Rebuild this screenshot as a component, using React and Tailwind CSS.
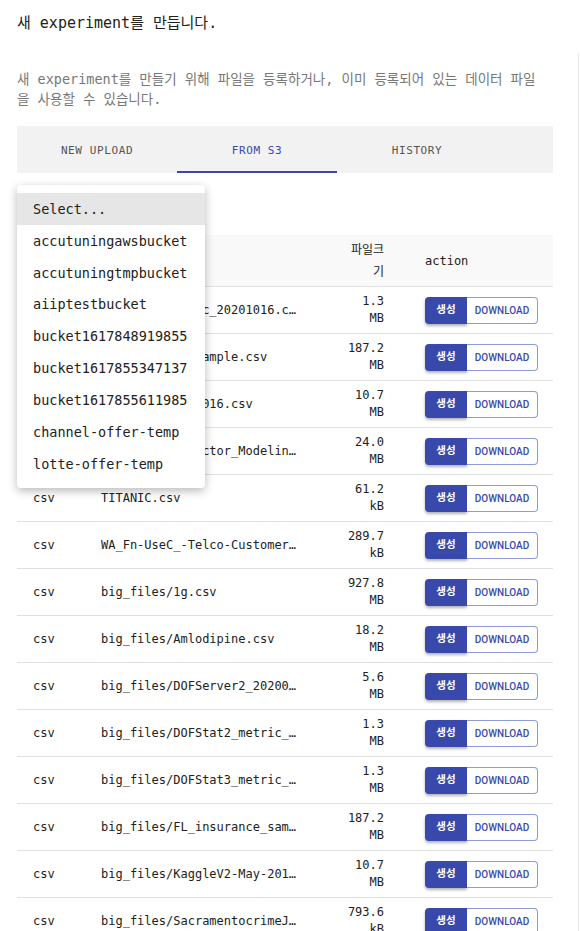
import React from 'react'

const buckets = [
    'Select...',
    'accutuningawsbucket',
    'accutuningtmpbucket',
    'aiiptestbucket',
    'bucket1617848919855',
    'bucket1617855347137',
    'bucket1617855611985',
    'channel-offer-temp',
    'lotte-offer-temp',
]

const files = [
    { name: 'DOFStat1_metric_20201016.csv', size: '1.3', unit: 'MB' },
    { name: 'FL_insurance_sample.csv', size: '187.2', unit: 'MB' },
    { name: 'KaggleV2-May-2016.csv', size: '10.7', unit: 'MB' },
    { name: 'Credit_Risk_Factor_Modeling.csv', size: '24.0', unit: 'MB' },
    { name: 'TITANIC.csv', size: '61.2', unit: 'kB' },
    { name: 'WA_Fn-UseC_-Telco-Customer-Churn.csv', size: '289.7', unit: 'kB' },
    { name: 'big_files/1g.csv', size: '927.8', unit: 'MB' },
    { name: 'big_files/Amlodipine.csv', size: '18.2', unit: 'MB' },
    { name: 'big_files/DOFServer2_20200901.csv', size: '5.6', unit: 'MB' },
    { name: 'big_files/DOFStat2_metric_20201016.csv', size: '1.3', unit: 'MB' },
    { name: 'big_files/DOFStat3_metric_20201016.csv', size: '1.3', unit: 'MB' },
    { name: 'big_files/FL_insurance_sample.csv', size: '187.2', unit: 'MB' },
    { name: 'big_files/KaggleV2-May-2016.csv', size: '10.7', unit: 'MB' },
    { name: 'big_files/SacramentocrimeJanuary2006.csv', size: '793.6', unit: 'kB' },
]

const tabs = ['NEW UPLOAD', 'FROM S3', 'HISTORY']

const App = () => {
    return (
        <main className="w-[580px] bg-white text-[#212121] font-['DejaVu_Sans_Mono','Noto_Sans_CJK_KR',monospace]">
            <div className="h-[53px] pl-[17px] pt-3">
                <h1 className="text-[15px] leading-[22px]">새 experiment를 만듭니다.</h1>
            </div>

            <section className="w-[579px] border-r border-[#e8e8e8] pl-[17px] pr-[25px] pt-4 pb-10">
                <p className="text-[13.5px] leading-[20px] text-[#777]">
                    새 experiment를 만들기 위해 파일을 등록하거나, 이미 등록되어 있는 데이터 파일
                    <br />
                    을 사용할 수 있습니다.
                </p>

                <div className="mt-[17px] flex h-[47px] bg-[#f2f2f2]">
                    {tabs.map((t, index) => (
                        <div
                            key={t}
                            className={`flex w-[160px] items-center justify-center border-b-2 pt-[5px] text-[11px] tracking-[0.6px] ${index === 1 ? 'border-[#3949ab] text-[#3949ab]' : 'border-transparent text-[#555]'}`}
                        >
                            {t}
                        </div>
                    ))}
                </div>

                <div className="relative mt-3 h-[40px]">
                    <ul className="absolute left-0 top-0 z-10 w-[188px] rounded bg-white py-2 shadow-[0_3px_10px_rgba(0,0,0,0.28)]">
                        {buckets.map((b, index) => (
                            <li
                                key={index}
                                className={`flex h-[31.9px] items-center pl-4 text-[13.5px] ${index === 0 ? 'bg-[#e6e6e6]' : ''}`}
                            >
                                {b}
                            </li>
                        ))}
                    </ul>
                </div>

                <div className="mt-[10px] text-[12px]">
                    <div className="flex h-[52px] items-center border-b border-[#e0e0e0] bg-[#f9f9f9]">
                        <div className="w-[68px] pl-4">type</div>
                        <div className="w-[243px] pl-4">name</div>
                        <div className="w-[72px] px-4 text-right leading-[22px]">
                            <div className="ml-auto w-[40px]">파일크기</div>
                        </div>
                        <div className="pl-[25px]">action</div>
                    </div>

                    {files.map((f, index) => (
                        <div key={index} className="flex h-[47px] items-center border-b border-[#e0e0e0]">
                            <div className="w-[68px] pl-4">csv</div>
                            <div className="w-[243px] pl-4">
                                <div className="max-w-[197px] truncate">{f.name}</div>
                            </div>
                            <div className="w-[72px] px-4 text-right leading-[17px]">
                                <div>{f.size}</div>
                                <div>{f.unit}</div>
                            </div>
                            <div className="flex pl-[25px] font-['Roboto','Noto_Sans_CJK_KR',sans-serif]">
                                <button className="h-[27px] w-[42px] rounded-l bg-[#3949ab] text-[10.5px] font-bold text-white shadow-[0_2px_3px_rgba(0,0,0,0.3)]">생성</button>
                                <button className="h-[27px] w-[71px] rounded-r border border-l-0 border-[#8f9ad8] bg-white text-[10px] font-medium text-[#3949ab]">DOWNLOAD</button>
                            </div>
                        </div>
                    ))}
                </div>
            </section>
        </main>
    )
}

export default App
